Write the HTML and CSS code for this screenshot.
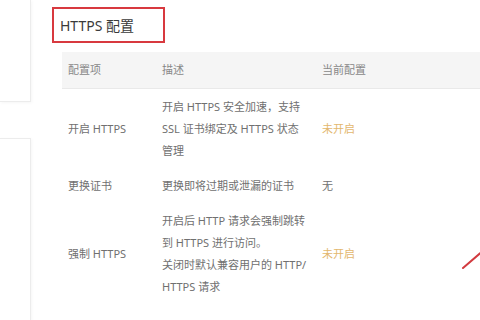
FILE: index.html
```html
<!DOCTYPE html>
<html lang="zh-CN">
<head>
  <meta charset="UTF-8">
  <meta name="viewport" content="width=device-width, initial-scale=1.0">
  <title>HTTPS 配置</title>
  <link rel="stylesheet" href="styles.css">
</head>
<body>
  <div class="page">
    <div class="side">
      <div class="side-card top"></div>
      <div class="side-card bottom"></div>
    </div>

    <div class="main">
      <div class="title-box">
        <h2>HTTPS 配置</h2>
      </div>

      <div class="table">
        <div class="row head">
          <div class="cell name">配置项</div>
          <div class="cell desc">描述</div>
          <div class="cell value">当前配置</div>
        </div>
        <div class="row">
          <div class="cell name">开启 HTTPS</div>
          <div class="cell desc">开启 HTTPS 安全加速，支持<br>SSL 证书绑定及 HTTPS 状态<br>管理</div>
          <div class="cell value off">未开启</div>
        </div>
        <div class="row">
          <div class="cell name">更换证书</div>
          <div class="cell desc">更换即将过期或泄漏的证书</div>
          <div class="cell value">无</div>
        </div>
        <div class="row">
          <div class="cell name">强制 HTTPS</div>
          <div class="cell desc">开启后 HTTP 请求会强制跳转<br>到 HTTPS 进行访问。<br>关闭时默认兼容用户的 HTTP/<br>HTTPS 请求</div>
          <div class="cell value off">未开启</div>
        </div>
      </div>
    </div>
  </div>

  <!-- annotation arrow -->
  <svg class="arrow" width="24" height="24" viewBox="0 0 24 24">
    <line x1="3" y1="20" x2="24" y2="2" stroke="#d23a3f" stroke-width="2" stroke-linecap="round"/>
  </svg>
</body>
</html>
```

FILE: styles.css
```css
body {
  margin: 0;
  background: #fff;
  font-family: "Noto Sans", "Noto Sans CJK SC", sans-serif;
  color: #707070;
  width: 480px;
  height: 320px;
  overflow: hidden;
  position: relative;
}
.page {
  display: flex;
  gap: 21px;
}
.side {
  width: 31px;
  flex-shrink: 0;
  display: flex;
  flex-direction: column;
  gap: 36px;
}
.side-card {
  background: #fff;
  border: 1px solid #ececec;
  border-left: none;
  box-shadow: 1px 1px 3px rgba(0,0,0,0.04);
}
.side-card.top {
  height: 101px;
  border-top: none;
}
.side-card.bottom {
  height: 182px;
  border-bottom: none;
}
.main {
  flex: 1;
  padding-top: 7px;
}
.title-box {
  width: 103px;
  height: 32px;
  border: 2px solid #d8393f;
  display: flex;
  align-items: center;
  padding-left: 6px;
}
.title-box h2 {
  margin: 0;
  font-size: 14px;
  font-weight: normal;
  color: #3a3a3a;
}
.table {
  margin-top: 9px;
  margin-left: 10px;
  font-size: 11px;
}
.row {
  display: grid;
  grid-template-columns: 94px 160px 1fr;
  align-items: center;
  padding: 6.5px 0;
  line-height: 22px;
}
.row.head {
  background: #f5f5f5;
  border-bottom: 1px solid #e9e9e9;
  padding: 7px 0;
  color: #888;
}
.cell {
  padding-left: 6px;
  white-space: nowrap;
}
.value.off {
  color: #e3b76e;
}
.arrow {
  position: absolute;
  left: 460px;
  top: 248px;
}
```
